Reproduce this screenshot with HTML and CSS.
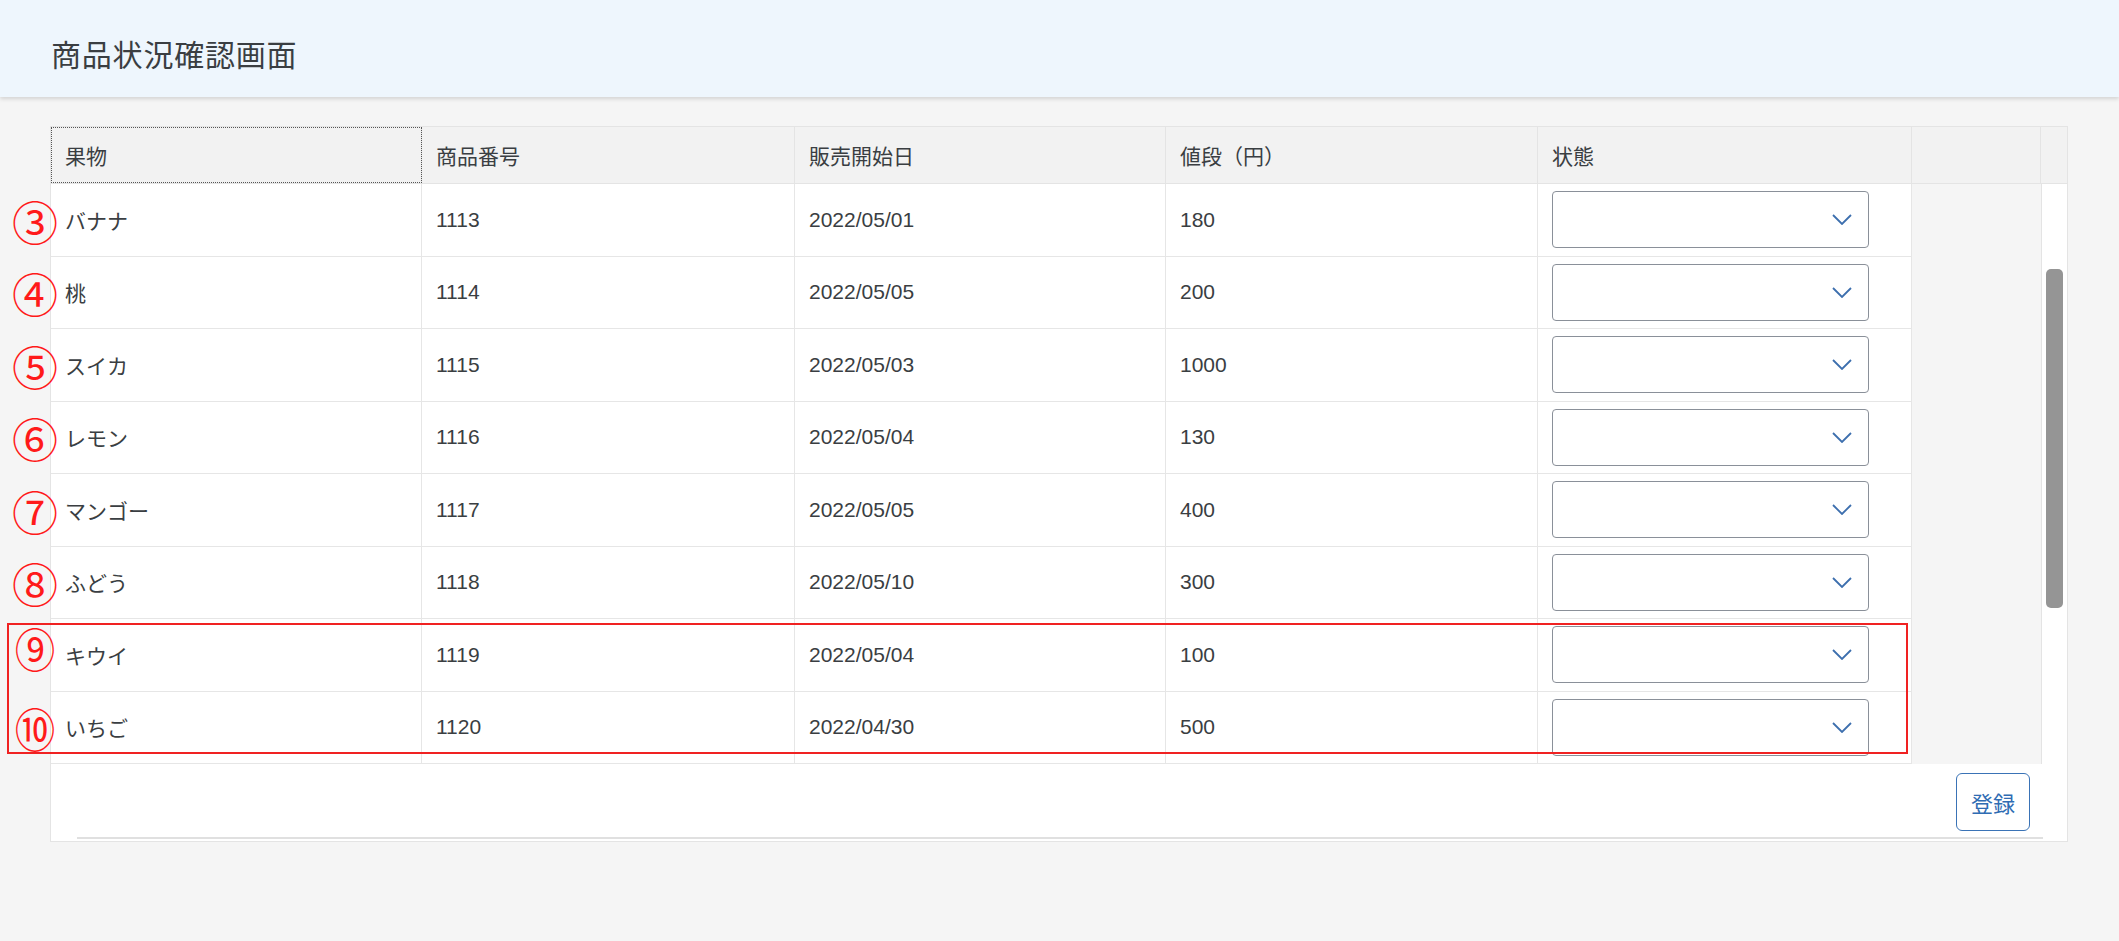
FILE: index.html
```html
<!DOCTYPE html>
<html lang="ja">
<head>
    <meta charset="UTF-8">
    <meta name="viewport" content="width=device-width, initial-scale=1.0">
    <title>商品状況確認画面</title>
    <link rel="stylesheet" href="styles.css">
</head>

<body>
    <header class="shell-bar">
        <h1 class="page-title">商品状況確認画面</h1>
    </header>

    <main class="page">
        <div class="table-panel">
            <div class="table-head">
                <div class="head-cell focused">果物</div>
                <div class="head-cell">商品番号</div>
                <div class="head-cell">販売開始日</div>
                <div class="head-cell">値段（円）</div>
                <div class="head-cell">状態</div>
                <div class="head-cell"></div>
                <div class="head-cell last"></div>
            </div>

            <div class="table-scroll">
                <div class="table-body">
                    <div class="row">
                        <div class="cell"><span class="mark">③</span>バナナ</div>
                        <div class="cell">1113</div>
                        <div class="cell">2022/05/01</div>
                        <div class="cell">180</div>
                        <div class="cell"><div class="select"><svg viewBox="0 0 20 11"><polyline points="1,1 10,10 19,1"/></svg></div></div>
                    </div>
                    <div class="row">
                        <div class="cell"><span class="mark">④</span>桃</div>
                        <div class="cell">1114</div>
                        <div class="cell">2022/05/05</div>
                        <div class="cell">200</div>
                        <div class="cell"><div class="select"><svg viewBox="0 0 20 11"><polyline points="1,1 10,10 19,1"/></svg></div></div>
                    </div>
                    <div class="row">
                        <div class="cell"><span class="mark">⑤</span>スイカ</div>
                        <div class="cell">1115</div>
                        <div class="cell">2022/05/03</div>
                        <div class="cell">1000</div>
                        <div class="cell"><div class="select"><svg viewBox="0 0 20 11"><polyline points="1,1 10,10 19,1"/></svg></div></div>
                    </div>
                    <div class="row">
                        <div class="cell"><span class="mark">⑥</span>レモン</div>
                        <div class="cell">1116</div>
                        <div class="cell">2022/05/04</div>
                        <div class="cell">130</div>
                        <div class="cell"><div class="select"><svg viewBox="0 0 20 11"><polyline points="1,1 10,10 19,1"/></svg></div></div>
                    </div>
                    <div class="row">
                        <div class="cell"><span class="mark">⑦</span>マンゴー</div>
                        <div class="cell">1117</div>
                        <div class="cell">2022/05/05</div>
                        <div class="cell">400</div>
                        <div class="cell"><div class="select"><svg viewBox="0 0 20 11"><polyline points="1,1 10,10 19,1"/></svg></div></div>
                    </div>
                    <div class="row">
                        <div class="cell"><span class="mark">⑧</span>ふどう</div>
                        <div class="cell">1118</div>
                        <div class="cell">2022/05/10</div>
                        <div class="cell">300</div>
                        <div class="cell"><div class="select"><svg viewBox="0 0 20 11"><polyline points="1,1 10,10 19,1"/></svg></div></div>
                    </div>
                    <div class="row">
                        <div class="cell"><span class="mark narrow up">⑨</span>キウイ</div>
                        <div class="cell">1119</div>
                        <div class="cell">2022/05/04</div>
                        <div class="cell">100</div>
                        <div class="cell"><div class="select"><svg viewBox="0 0 20 11"><polyline points="1,1 10,10 19,1"/></svg></div></div>
                    </div>
                    <div class="row">
                        <div class="cell"><span class="mark narrow">⑩</span>いちご</div>
                        <div class="cell">1120</div>
                        <div class="cell">2022/04/30</div>
                        <div class="cell">500</div>
                        <div class="cell"><div class="select"><svg viewBox="0 0 20 11"><polyline points="1,1 10,10 19,1"/></svg></div></div>
                    </div>

                    <!-- rows 9 and 10 marked in red -->
                    <div class="highlight"></div>
                </div>
                <div class="table-filler"></div>
                <div class="scrollbar"><div class="scroll-thumb"></div></div>
            </div>

            <div class="table-foot">
                <div class="foot-actions">
                    <button class="btn-ghost">登録</button>
                </div>
                <div class="hscroll"></div>
            </div>
        </div>
    </main>
</body>
</html>
```

FILE: styles.css
```css
/* General Page Styling */
body, html {
    font-family: 'Liberation Sans', 'Noto Sans CJK JP', sans-serif;
    background-color: #f5f5f5;
    color: #3a3e42;
    padding: 0;
    margin: 0;
}

/* Header Styling */
.shell-bar {
    height: 97px;
    background: #eef6fd;
    box-shadow: 0 2px 4px rgba(0, 0, 0, 0.14);
    display: flex;
    align-items: center;
    padding: 8px 0 0 51px;
    box-sizing: border-box;
}

.page-title {
    margin: 0;
    font-family: 'Noto Sans CJK JP', sans-serif;
    font-size: 30px;
    font-weight: 400;
    letter-spacing: 0.8px;
    color: #3a3e42;
}

.page {
    padding: 29px 51px 0 50px;
}

/* Table */
.table-panel {
    border: 1px solid #e4e4e4;
    background: #fff;
}

.table-head {
    display: grid;
    grid-template-columns: 371px 373px 371px 372px 374px 129px 26px;
    height: 57px;
    background: #f2f2f2;
    border-bottom: 1px solid #e4e4e4;
    box-sizing: border-box;
}

.head-cell {
    display: flex;
    align-items: center;
    padding-left: 14px;
    font-size: 21px;
    border-right: 1px solid #e4e4e4;
}

.head-cell.last {
    border-right: none;
}

.head-cell.focused {
    outline: 1px dotted #555;
    outline-offset: -1px;
}

.table-scroll {
    display: flex;
}

.table-body {
    position: relative;
    width: 1861px;
}

.row {
    display: grid;
    grid-template-columns: 371px 373px 371px 372px 374px;
    height: 72.5px;
    border-bottom: 1px solid #e6e6e6;
    box-sizing: border-box;
}

.cell {
    position: relative;
    display: flex;
    align-items: center;
    padding-left: 14px;
    font-size: 21px;
    border-right: 1px solid #e6e6e6;
}

/* red circled numbers beside each row */
.mark {
    position: absolute;
    left: -39px;
    top: 50%;
    transform: translateY(-50%);
    font-family: 'Noto Sans CJK JP', sans-serif;
    font-size: 46px;
    line-height: 1;
    color: #ff1a1a;
}

.mark.narrow {
    transform: translateY(-50%) scaleX(0.88);
}

.mark.up {
    margin-top: -8px;
}

.highlight {
    position: absolute;
    left: -44px;
    top: 439px;
    width: 1901px;
    height: 131px;
    border: 2px solid #f02222;
    box-sizing: border-box;
    pointer-events: none;
}

/* Select box */
.select {
    width: 317px;
    height: 57px;
    border: 1.5px solid #8a9099;
    border-radius: 4px;
    background: #fff;
    box-sizing: border-box;
    display: flex;
    align-items: center;
    justify-content: flex-end;
    padding-right: 16px;
}

.select svg {
    width: 20px;
    height: 11px;
    fill: none;
    stroke: #3d6fae;
    stroke-width: 1.8;
}

.table-filler {
    width: 129px;
    background: #f5f5f5;
}

.scrollbar {
    width: 26px;
    border-left: 1px solid #e4e4e4;
    background: #fff;
    box-sizing: border-box;
}

.scroll-thumb {
    margin: 85px 0 0 4px;
    width: 17px;
    height: 339px;
    border-radius: 5px;
    background: #959595;
}

/* Footer */
.table-foot {
    height: 77px;
    display: flex;
    flex-direction: column;
}

.foot-actions {
    display: flex;
    justify-content: flex-end;
    padding: 9px 37px 0 0;
}

.btn-ghost {
    width: 74px;
    height: 58px;
    border: 1.5px solid #3a73b6;
    border-radius: 6px;
    background: #fff;
    color: #2f6cb3;
    font-family: 'Noto Sans CJK JP', sans-serif;
    font-size: 22px;
    cursor: pointer;
}

.hscroll {
    margin: auto 24px 2px 26px;
    height: 2px;
    background: #e0e0e0;
}
```
